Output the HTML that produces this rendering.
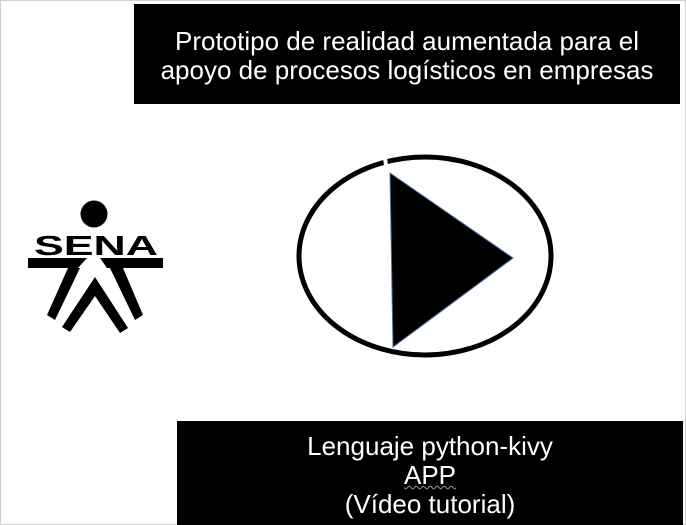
<!DOCTYPE html>
<html><head><meta charset="utf-8"><style>
html,body{margin:0;padding:0;}
body{width:686px;height:525px;position:relative;overflow:hidden;background:#fff;font-family:"Liberation Sans",sans-serif;}
.frame{position:absolute;left:0;top:0;width:684px;height:523px;border:1px solid #d0d0d0;}
.box{position:absolute;background:#000;color:#fff;text-align:center;font-size:26px;}
</style></head><body>
<div class="frame"></div>
<div class="box" style="left:134px;top:4px;width:546px;height:100px;">
<div style="position:absolute;left:0;right:0;top:23px;line-height:29px;">Prototipo de realidad aumentada para el<br>apoyo de procesos logísticos en empresas</div>
</div>
<div class="box" style="left:177px;top:421px;width:506px;height:104px;">
<div style="position:absolute;left:0;right:0;top:11px;line-height:29px;">Lenguaje python-kivy<br><span style="text-decoration:underline wavy #999;text-decoration-thickness:1px;">APP</span><br>(Vídeo tutorial)</div>
</div>
<svg width="686" height="525" style="position:absolute;left:0;top:0">
<circle cx="94" cy="214" r="13.5" fill="#000"/>
<text x="34" y="255" font-family="Liberation Sans" font-weight="bold" font-size="28" textLength="124" lengthAdjust="spacingAndGlyphs">SENA</text>
<polygon points="28,258 87,258 78,268 28,268" fill="#000"/>
<polygon points="100,258 163,258 163,268 107,268" fill="#000"/>
<polygon points="68,268 80,268 55,320 47,315" fill="#000"/>
<polygon points="95,277 128,328 120,333 95,296 70,332 62,327" fill="#000"/>
<polygon points="110,268 123,268 143,315 135,320" fill="#000"/>
<ellipse cx="425" cy="256" rx="126" ry="99" fill="none" stroke="#000" stroke-width="5"/>
<rect x="383" y="150" width="4" height="16" fill="#fff" transform="rotate(-8 385 158)"/>
<polygon points="390,173 513,258 393,347" fill="#000" stroke="#4a6fa5" stroke-width="1"/>
</svg>
</body></html>
